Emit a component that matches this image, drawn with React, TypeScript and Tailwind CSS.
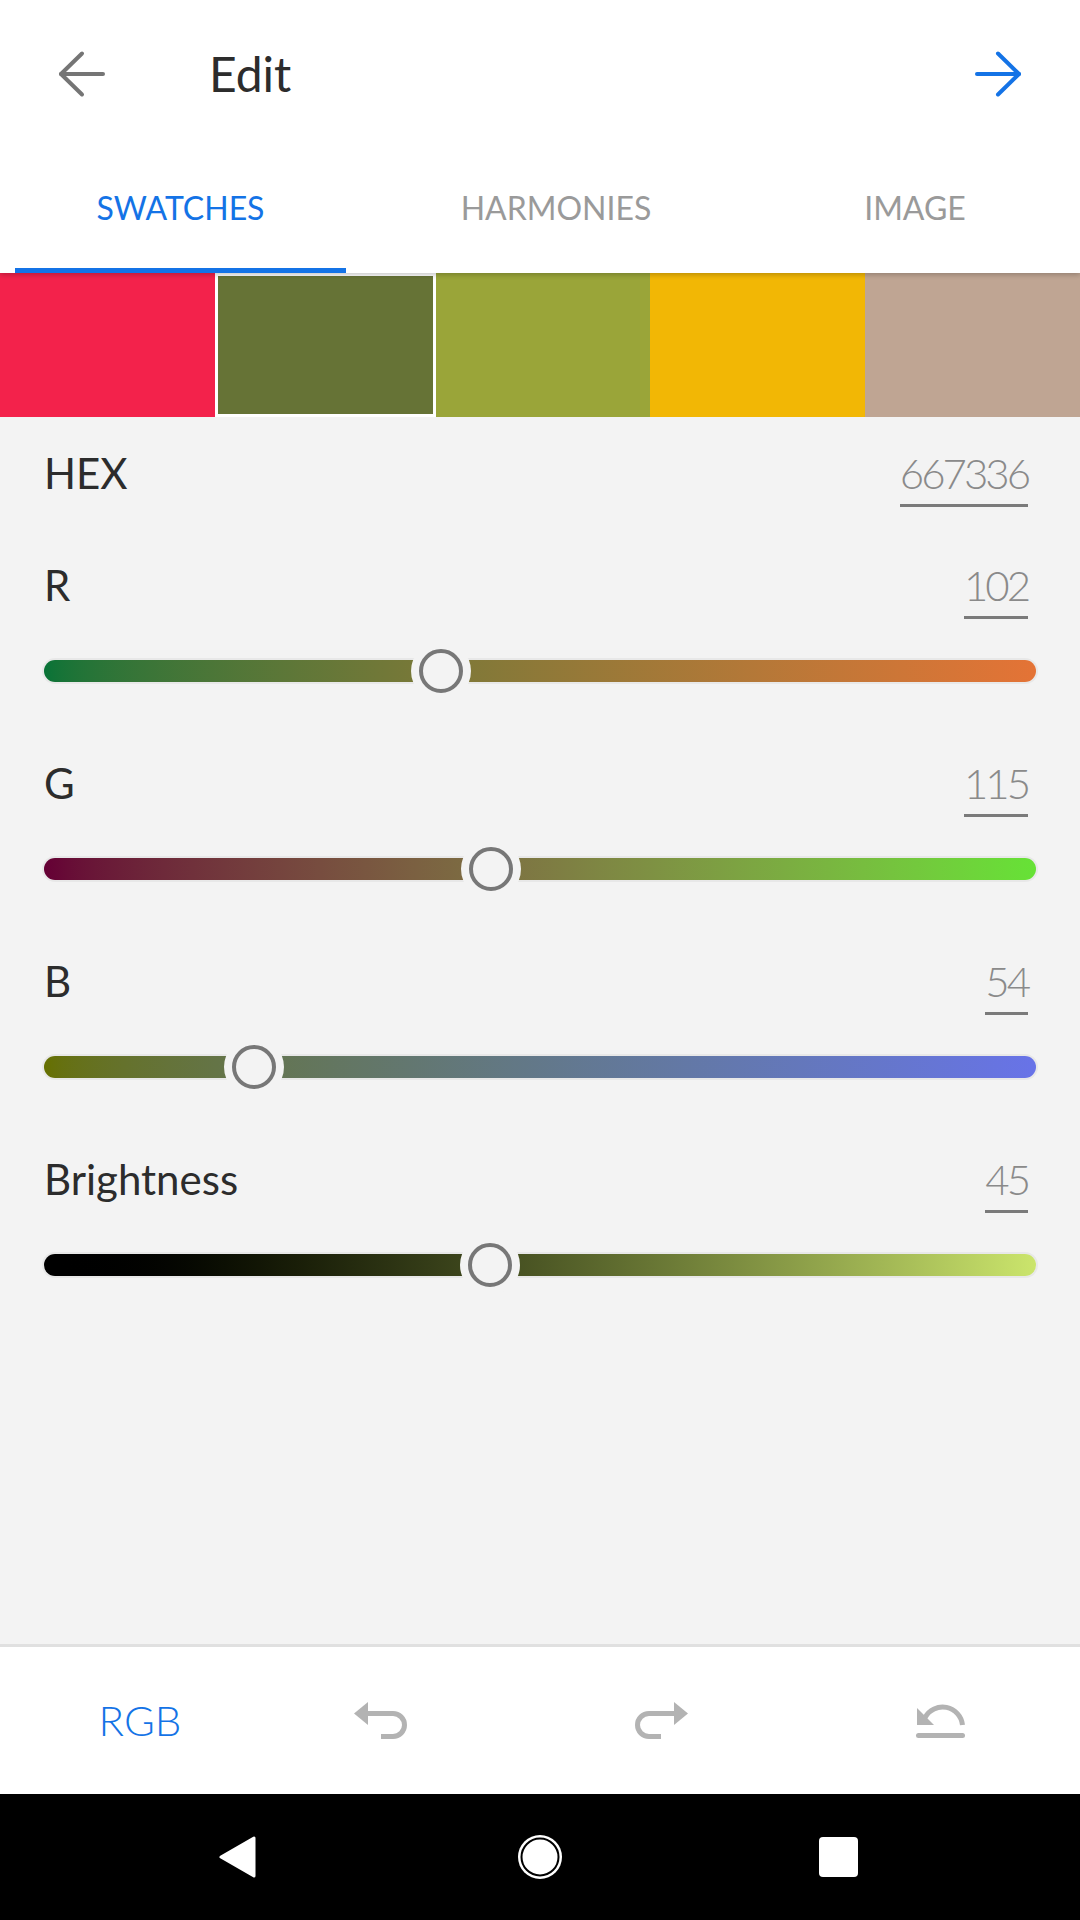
import React from "react";

const swatches = ["#f3224b", "#667336", "#9aa539", "#f2b705", "#bfa593"];

const tabs = [
  { label: "SWATCHES", width: "w-[331px]", active: true },
  { label: "HARMONIES", width: "w-[420px]", active: false },
  { label: "IMAGE", width: "w-[298px]", active: false },
];

const sliders = [
  { label: "R", value: 102, max: 255, grad: "from-[#077337] to-[#e47336]" },
  { label: "G", value: 115, max: 255, grad: "from-[#650035] to-[#66e236]" },
  { label: "B", value: 54, max: 255, grad: "from-[#667000] to-[#6873e8]" },
  { label: "Brightness", value: 45, max: 100, grad: "from-[#000000] to-[#cbe56c]" },
];

const TRACK_W = 992;

const ArrowIcon = ({ color, flip }: { color: string; flip?: boolean }) => (
  <svg
    width="48"
    height="48"
    viewBox="0 0 48 48"
    fill="none"
    stroke={color}
    strokeWidth="4"
    strokeLinecap="round"
    strokeLinejoin="round"
    className={flip ? "-scale-x-100" : ""}
  >
    <path d="M3 24 H45" />
    <path d="M24 3.5 L3 24 L24 44.5" />
  </svg>
);

const UndoIcon = ({ flip }: { flip?: boolean }) => (
  <svg
    width="53"
    height="37"
    viewBox="0 0 53 37"
    className={flip ? "-scale-x-100" : ""}
  >
    <path d="M0 11.5 L14 0 L14 23 Z" fill="#b3b3b3" />
    <path
      d="M13 11.5 H39 A11.5 11.5 0 0 1 39 34.5 H27"
      fill="none"
      stroke="#b3b3b3"
      strokeWidth="5"
    />
  </svg>
);

const ResetIcon = () => (
  <svg width="49" height="34" viewBox="0 0 49 34" overflow="visible">
    <path d="M1 4 L1 21 L18 21 Z" fill="#b3b3b3" />
    <path
      d="M9 13.5 A20 20 0 0 1 46.5 21"
      fill="none"
      stroke="#b3b3b3"
      strokeWidth="5"
    />
    <rect x="0" y="29" width="49" height="5" rx="2.5" fill="#b3b3b3" />
  </svg>
);

const ValueField = ({ value }: { value: string | number }) => (
  <div className="mr-[8px] flex flex-col items-end">
    <span className="h-[50px] text-[42px] font-light leading-[50px] tracking-[-3px] text-[#8a8a8a]">
      {value}
    </span>
    <span className="mt-[6px] h-[3px] w-full bg-[#7a7a7a]" />
  </div>
);

const Slider = ({
  label,
  value,
  max,
  grad,
  first,
}: {
  label: string;
  value: number;
  max: number;
  grad: string;
  first?: boolean;
}) => {
  const left = (value / max) * TRACK_W - 30;
  return (
    <div className={first ? "mt-[53px]" : "mt-[57px]"}>
      <div className="flex items-start justify-between">
        <span className="h-[50px] text-[42px] leading-[50px] text-[#2c2c2c]">{label}</span>
        <ValueField value={value} />
      </div>
      <div className="relative mt-[22px] py-[19px]">
        <div
          className={`h-[22px] rounded-full bg-linear-to-r ${grad} shadow-[0_0_0_2px_#e8e8e8]`}
        />
        <div
          className="absolute top-0 flex h-[60px] w-[60px] items-center justify-center rounded-full bg-[#f3f3f3]"
          style={{ left }}
        >
          <div className="h-[44px] w-[44px] rounded-full border-4 border-[#777777]" />
        </div>
      </div>
    </div>
  );
};

export default function App() {
  return (
    <div className="flex h-[1920px] w-[1080px] flex-col overflow-hidden bg-[#f3f3f3] font-['Lato',sans-serif]">
      {/* header + tabs */}
      <div className="relative z-10 bg-white shadow-[0_2px_5px_rgba(0,0,0,0.22)]">
        <div className="flex h-[148px] items-center pl-[58px] pr-[58px]">
          <ArrowIcon color="#757575" />
          <span className="ml-[103px] text-[48px] text-[#2c2c2c]">Edit</span>
          <div className="flex-1" />
          <ArrowIcon color="#1473e6" flip />
        </div>
        <div className="flex h-[125px] pl-[15px]">
          {tabs.map((t) => (
            <div key={t.label} className={`flex flex-col ${t.width}`}>
              <div
                className={`flex h-[120px] items-center justify-center text-[32px] ${
                  t.active ? "text-[#1473e6]" : "text-[#9a9a9a]"
                }`}
              >
                {t.label}
              </div>
              {t.active && <div className="h-[5px] bg-[#1473e6]" />}
            </div>
          ))}
        </div>
      </div>

      {/* swatches */}
      <div className="flex h-[144px]">
        {swatches.map((c, i) => (
          <div
            key={c}
            className={`flex-1 ${i === 1 ? "border-[3px] border-white" : ""}`}
            style={{ backgroundColor: c }}
          />
        ))}
      </div>

      {/* editor */}
      <div className="flex-1 px-[44px] pt-[31px]">
        <div className="flex items-start justify-between">
          <span className="h-[50px] text-[42px] leading-[50px] text-[#2c2c2c]">HEX</span>
          <ValueField value="667336" />
        </div>
        {sliders.map((s, i) => (
          <Slider key={s.label} {...s} first={i === 0} />
        ))}
      </div>

      <div className="h-[3px] bg-[#e0e0e0]" />

      {/* bottom toolbar */}
      <div className="flex h-[147px] items-center bg-white">
        <div className="flex w-[280px] justify-center text-[42px] font-light text-[#1473e6]">RGB</div>
        <div className="flex w-[200px] justify-center">
          <UndoIcon />
        </div>
        <div className="flex w-[362px] justify-center">
          <UndoIcon flip />
        </div>
        <div className="flex w-[196px] justify-center">
          <ResetIcon />
        </div>
      </div>

      {/* android nav bar */}
      <div className="flex h-[126px] items-center bg-black pl-[219px]">
        <svg width="37" height="42" viewBox="0 0 37 42">
          <path
            d="M2 21 L35 2 L35 40 Z"
            fill="white"
            stroke="white"
            strokeWidth="3"
            strokeLinejoin="round"
          />
        </svg>
        <svg width="46" height="46" viewBox="0 0 46 46" className="ml-[261px]">
          <circle cx="23" cy="23" r="22" fill="white" />
          <circle cx="23" cy="23" r="18.5" fill="white" stroke="black" strokeWidth="2" />
        </svg>
        <div className="ml-[256px] h-[40px] w-[39px] rounded-[4px] bg-white" />
      </div>
    </div>
  );
}
